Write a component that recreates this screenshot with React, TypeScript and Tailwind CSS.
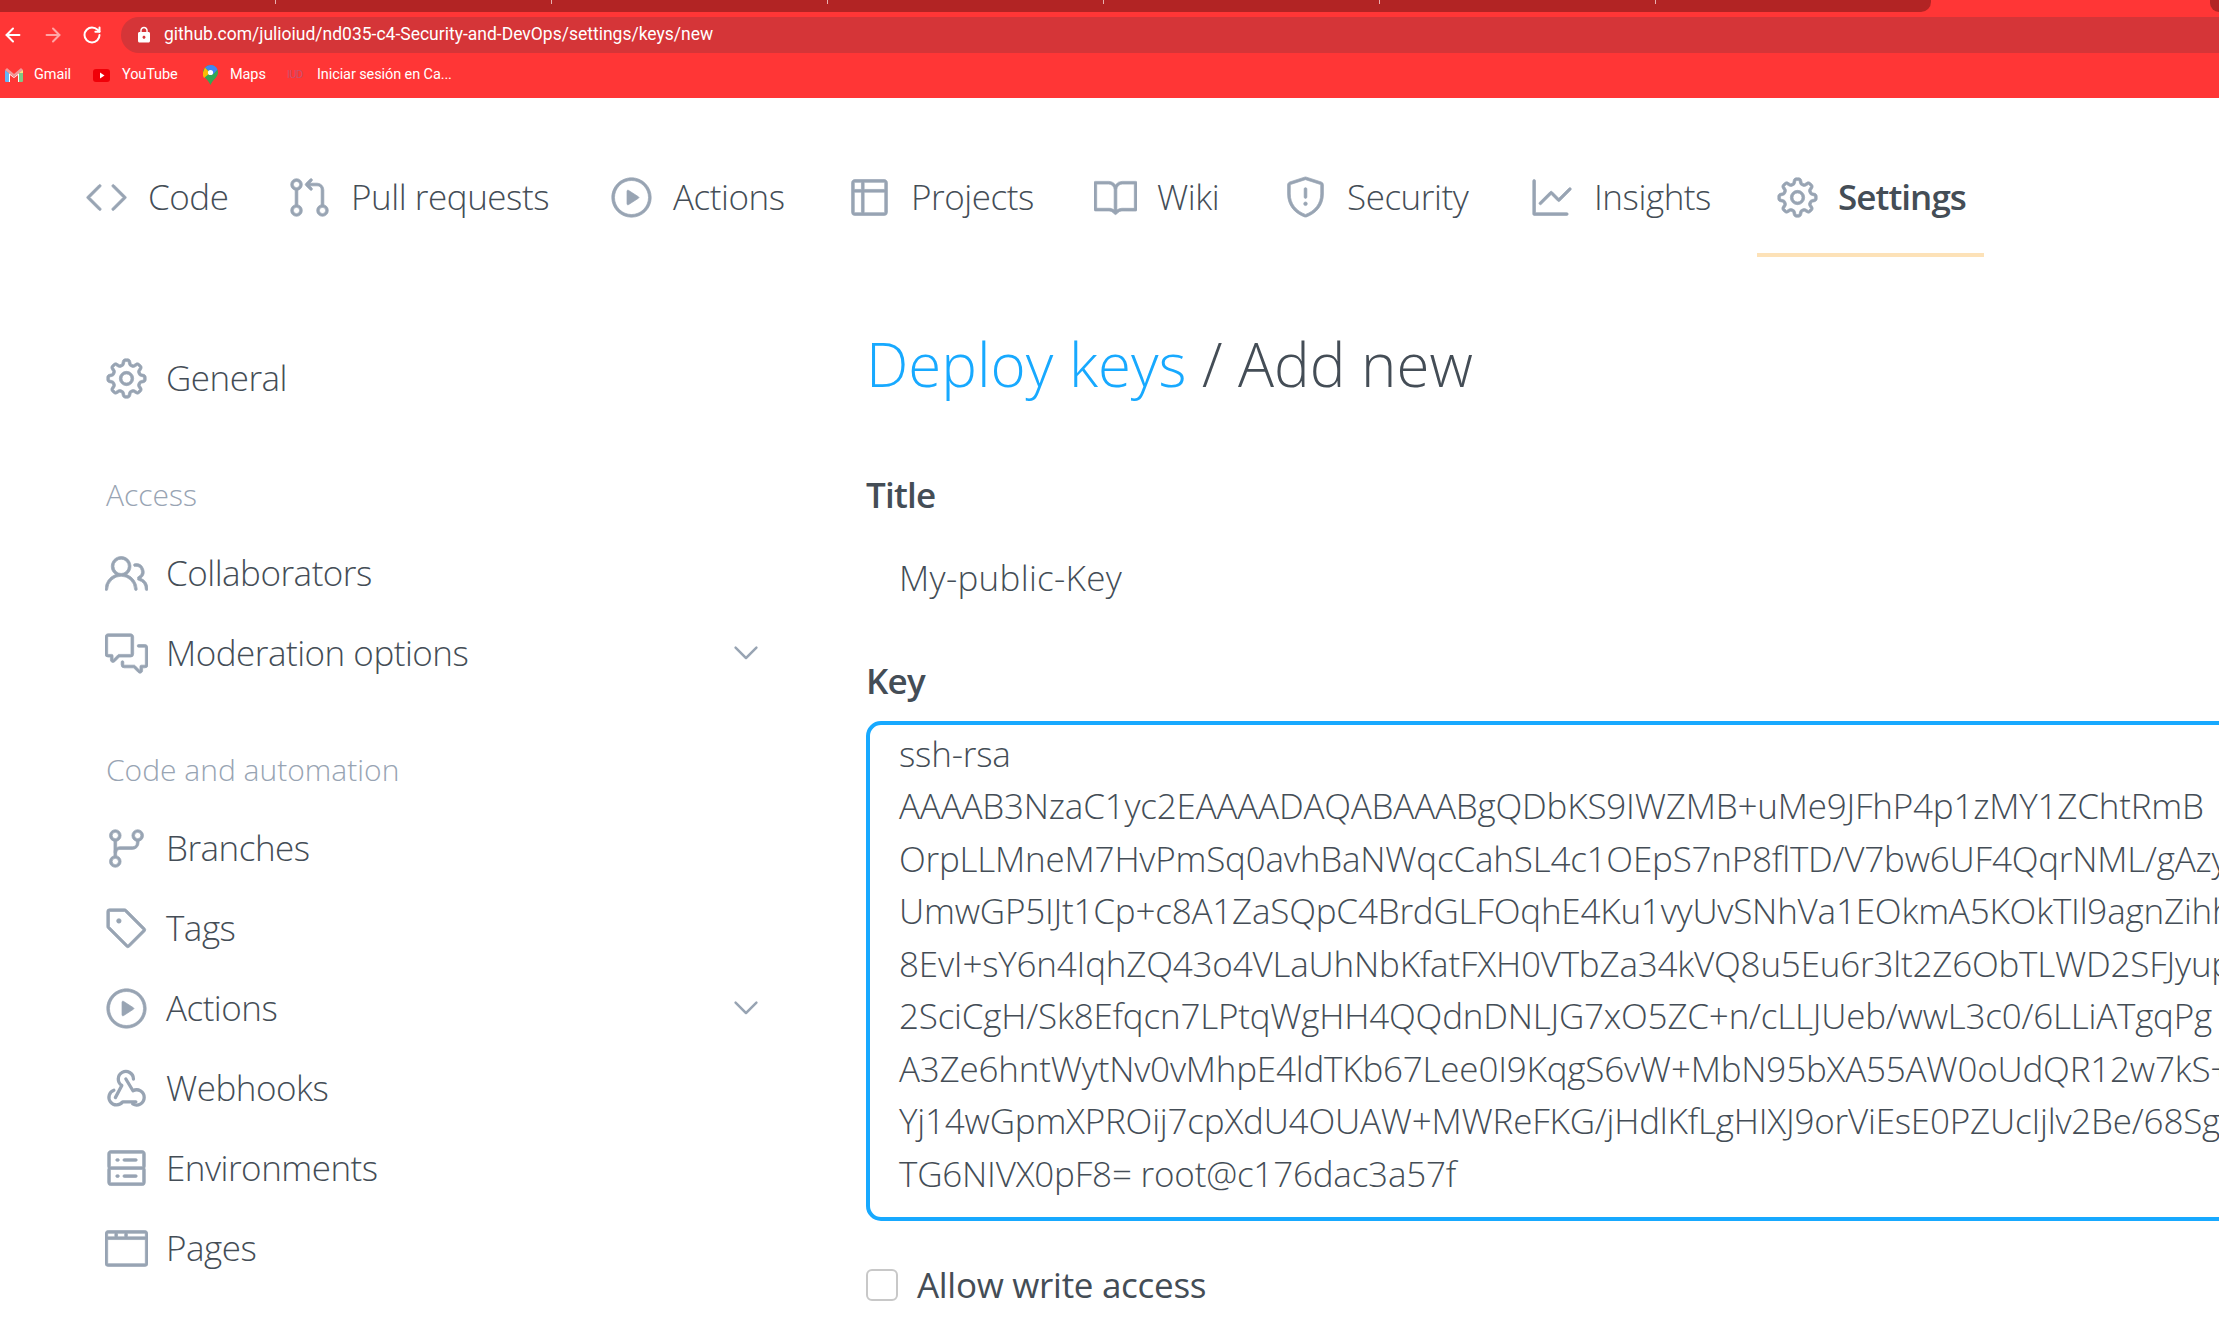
import { ArrowLeft, ArrowRight, RotateCw } from "lucide-react";
import { MdLock } from "react-icons/md";
import {
  GoBook,
  GoBrowser,
  GoChevronDown,
  GoCode,
  GoCommentDiscussion,
  GoGear,
  GoGitBranch,
  GoGitPullRequest,
  GoGraph,
  GoPeople,
  GoPlay,
  GoServer,
  GoShield,
  GoTable,
  GoTag,
} from "react-icons/go";

const navItems = [
  { label: "Code", icon: GoCode, width: "w-[203px]" },
  { label: "Pull requests", icon: GoGitPullRequest, width: "w-[322px]" },
  { label: "Actions", icon: GoPlay, width: "w-[238px]" },
  { label: "Projects", icon: GoTable, width: "w-[246px]" },
  { label: "Wiki", icon: GoBook, width: "w-[190px]" },
  { label: "Security", icon: GoShield, width: "w-[247px]" },
  { label: "Insights", icon: GoGraph, width: "w-[245px]" },
];

const keyLines = [
  "ssh-rsa",
  "AAAAB3NzaC1yc2EAAAADAQABAAABgQDbKS9IWZMB+uMe9JFhP4p1zMY1ZChtRmB",
  "OrpLLMneM7HvPmSq0avhBaNWqcCahSL4c1OEpS7nP8flTD/V7bw6UF4QqrNML/gAzy",
  "UmwGP5IJt1Cp+c8A1ZaSQpC4BrdGLFOqhE4Ku1vyUvSNhVa1EOkmA5KOkTIl9agnZihh",
  "8EvI+sY6n4IqhZQ43o4VLaUhNbKfatFXH0VTbZa34kVQ8u5Eu6r3lt2Z6ObTLWD2SFJyup",
  "2SciCgH/Sk8Efqcn7LPtqWgHH4QQdnDNLJG7xO5ZC+n/cLLJUeb/wwL3c0/6LLiATgqPg",
  "A3Ze6hntWytNv0vMhpE4ldTKb67Lee0I9KqgS6vW+MbN95bXA55AW0oUdQR12w7kS+",
  "Yj14wGpmXPROij7cpXdU4OUAW+MWReFKG/jHdlKfLgHIXJ9orViEsE0PZUcIjlv2Be/68Sg",
  "TG6NIVX0pF8= root@c176dac3a57f",
];

type IconProps = { size?: number; className?: string; strokeWidth?: number };

function WebhookIcon({ size, className }: IconProps) {
  return (
    <svg width={size} height={size} viewBox="-0.5 -0.5 17 17" fill="none" stroke="currentColor" strokeWidth="1.300" strokeLinecap="round" strokeLinejoin="round" className={className}>
      <path d="M10.750 4.250a3 3 0 1 0-4.600 2.550L3.600 11.600" />
      <path d="M7.750 4.250l2.800 4.650a3 3 0 1 1-.1 5.200" />
      <path d="M3 8.700a3 3 0 1 0 3.500 4.550h5.200" />
    </svg>
  );
}

// the Go set is drawn on a 24 grid, the picture has the heavier 16 grid look
const iconClass = "text-[#98a4b3] shrink-0 -m-[1.5px]";

function SideRow({
  icon: Icon,
  label,
  chevron,
}: {
  icon: React.ComponentType<IconProps>;
  label: string;
  chevron?: boolean;
}) {
  return (
    <div className="flex items-center h-20 gap-[20px]">
      <Icon size={43} strokeWidth={0.4} className={iconClass} />
      <span className="flex-1 tracking-[-0.5px]">{label}</span>
      {chevron && <GoChevronDown size={40} className="text-[#98a4b3]" />}
    </div>
  );
}

function SideHeading({ label }: { label: string }) {
  return (
    <div className="flex items-end h-[115px] pb-[16px] text-[30px] leading-[45px] text-[#98a4b3]">
      {label}
    </div>
  );
}

function Bookmark({ icon, label, className }: { icon: React.ReactNode; label: string; className: string }) {
  return (
    <div className={`flex items-center ${className}`}>
      {icon}
      <span>{label}</span>
    </div>
  );
}

export default function App() {
  return (
    <div className="w-[2219px] h-[1323px] overflow-hidden bg-white flex flex-col font-['Open_Sans',sans-serif] font-[350] text-[35px] leading-[52.5px] text-[#444d56]">
      {/* browser chrome */}
      <div className="h-[98px] shrink-0 bg-[#ff3636] text-white font-['Roboto',sans-serif] font-normal">
        <div className="flex h-3">
          <div className="flex w-[1931px] bg-[#b22424] rounded-br-[10px]">
            {[0, 1, 2, 3, 4, 5].map((i) => (
              <div key={i} className="w-[276px] flex justify-end">
                <div className="w-px h-1 bg-[#e8b0b0]" />
              </div>
            ))}
          </div>
          <div className="w-[279px]" />
          <div className="flex-1 bg-[#b22424] rounded-bl-[10px]" />
        </div>
        <div className="flex items-center h-[36px] mt-[5px]">
          <div className="flex items-center w-[121px] pl-[2px] gap-[18px]">
            <ArrowLeft size={22} strokeWidth={2.2} />
            <ArrowRight size={22} strokeWidth={2.2} className="text-[#ffa5a5]" />
            <RotateCw size={20} strokeWidth={2.4} />
          </div>
          <div className="flex items-center flex-1 h-full bg-[#d53538] rounded-l-full pl-[14px] gap-[11px] text-[17.5px] leading-none">
            <MdLock size={18} />
            <span>github.com/julioiud/nd035-c4-Security-and-DevOps/settings/keys/new</span>
          </div>
        </div>
        <div className="flex items-center h-[34px] mt-[5px] text-[14.5px] tracking-[-0.1px]">
          <Bookmark
            className="w-[93px] pl-[5px] gap-[11px]"
            label="Gmail"
            icon={
              <svg width="18" height="16" viewBox="0 0 18 16">
                <path d="M0 3v11a1 1 0 0 0 1 1h3V6z" fill="#64b5f6" />
                <path d="M18 3v11a1 1 0 0 1-1 1h-3V6z" fill="#81c784" />
                <path d="M4 15V6l5 4 5-4v9h-1V8L9 11 5 8v7z" fill="#ffffff" />
                <path d="M0 3l2-2 7 6 7-6 2 2-9 7z" fill="#ef9a9a" />
                <path d="M14 6l4-3v3z" fill="#ffe082" />
              </svg>
            }
          />
          <Bookmark
            className="w-[110px] gap-[12px]"
            label="YouTube"
            icon={
              <svg width="17" height="13" viewBox="0 0 17 13">
                <rect width="17" height="13" rx="3" fill="#f00008" />
                <path d="M7 3.500l4.500 3L7 9.500z" fill="#fff" />
              </svg>
            }
          />
          <Bookmark
            className="w-[84px] gap-[12px]"
            label="Maps"
            icon={
              <svg width="15" height="20" viewBox="0 0 15 20">
                <path d="M7.500 0a7.500 7.500 0 0 1 7.500 7.500c0 4.500-5 7-7.500 12.500C5 14.500 0 12 0 7.500A7.500 7.500 0 0 1 7.500 0z" fill="#34a853" />
                <path d="M2 2.500L7 8 1 13a8 8 0 0 1-1-5.500z" fill="#fbbc04" />
                <path d="M7.500 0a7.500 7.500 0 0 1 7 4.500L10 9.500 2 2.500A7.500 7.500 0 0 1 7.500 0z" fill="#4285f4" />
                <circle cx="7.500" cy="7.500" r="2.600" fill="#fff" />
              </svg>
            }
          />
          <Bookmark
            className="gap-[11px]"
            label="Iniciar sesión en Ca..."
            icon={<span className="w-[19px] text-[11px] tracking-[-0.5px] text-[#c9506f]">IUD</span>}
          />
        </div>
      </div>

      {/* repo nav */}
      <div className="flex items-end h-[159px] shrink-0 pl-[66px]">
        {navItems.map((item) => (
          <div key={item.label} className={`flex items-center h-[116px] pl-[20px] gap-[22px] pb-[4px] tracking-[-0.45px] ${item.width}`}>
            <item.icon size={43} strokeWidth={0.4} className={iconClass} />
            <span>{item.label}</span>
          </div>
        ))}
        <div className="flex items-center h-[116px] w-[227px] pl-[20px] gap-[21px] border-b-4 border-[#fde2b8] font-semibold tracking-[-0.95px]">
          <GoGear size={43} strokeWidth={0.4} className={iconClass} />
          <span>Settings</span>
        </div>
      </div>

      <div className="flex pl-[106px]">
        {/* sidebar */}
        <div className="w-[660px] shrink-0 pt-[81px]">
          <SideRow icon={GoGear} label="General" />
          <SideHeading label="Access" />
          <SideRow icon={GoPeople} label="Collaborators" />
          <SideRow icon={GoCommentDiscussion} label="Moderation options" chevron />
          <SideHeading label="Code and automation" />
          <SideRow icon={GoGitBranch} label="Branches" />
          <SideRow icon={GoTag} label="Tags" />
          <SideRow icon={GoPlay} label="Actions" chevron />
          <SideRow icon={WebhookIcon} label="Webhooks" />
          <SideRow icon={GoServer} label="Environments" />
          <SideRow icon={GoBrowser} label="Pages" />
        </div>

        {/* form */}
        <div className="ml-[100px] w-[1500px] shrink-0 pt-[62px]">
          <h1 className="text-[60px] leading-[90px]">
            <span className="text-[#17a9ff]">Deploy keys</span> / Add new
          </h1>
          <div className="mt-[60px] font-semibold tracking-[-0.8px]">Title</div>
          <div className="pl-[33px] pt-[30px] pb-[50.5px] tracking-[0.3px]">My-public-Key</div>
          <div className="font-semibold tracking-[-0.8px]">Key</div>
          <div className="mt-[13.5px] h-[500px] border-4 border-[#17a9ff] rounded-[15px] pl-[29px] pt-[3px] whitespace-pre overflow-hidden tracking-[-0.2px]">
            {keyLines.map((line) => (
              <div key={line}>{line}</div>
            ))}
          </div>
          <div className="flex items-center mt-[38px] gap-[19px]">
            <div className="w-8 h-8 border-2 border-[#c8c8c8] rounded-md shrink-0" />
            <span className="font-medium tracking-[-0.3px]">Allow write access</span>
          </div>
          <div className="pl-[50px] text-[30px] leading-[45px] text-[#586069]">
            Can this key be used to push to this repository? Deploy keys always have pull access.
          </div>
        </div>
      </div>
    </div>
  );
}
